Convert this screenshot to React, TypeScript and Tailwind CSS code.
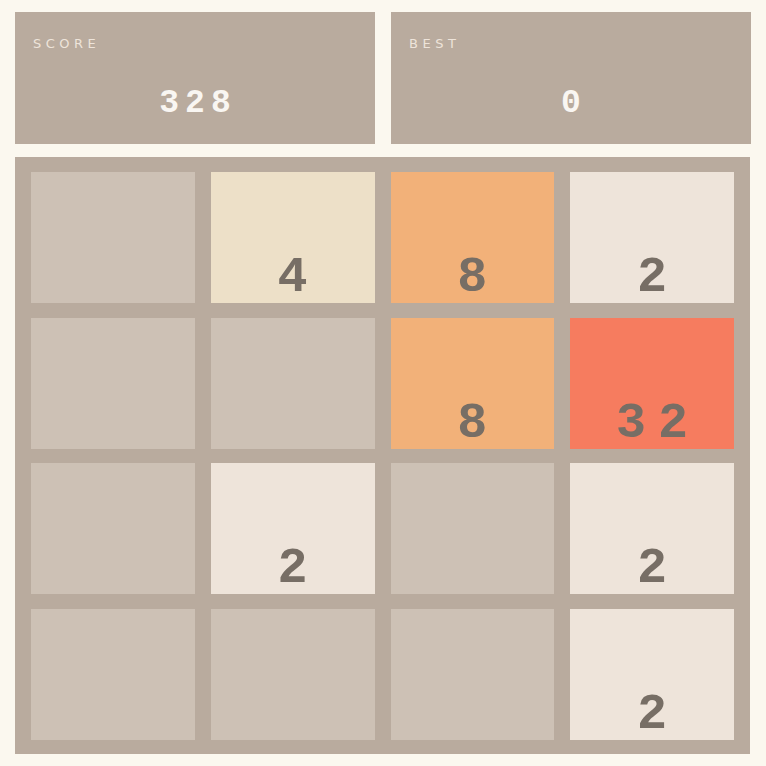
import React from 'react';

const board: number[][] = [
  [0, 4, 8, 2],
  [0, 0, 8, 32],
  [0, 2, 0, 2],
  [0, 0, 0, 2],
];

const tileColor: Record<number, string> = {
  0: 'bg-[#cdc1b5]',
  2: 'bg-[#eee4da]',
  4: 'bg-[#ede0c8]',
  8: 'bg-[#f2b179]',
  16: 'bg-[#f59563]',
  32: 'bg-[#f67c5f]',
};

const mono = { fontFamily: '"Liberation Mono", "DejaVu Sans Mono", monospace' };

const ScoreBox: React.FC<{ label: string; value: number }> = ({ label, value }) => (
  <div className="h-[132px] flex-1 bg-[#b9ab9e] px-[18px] pt-6" style={mono}>
    <div
      className="text-[13px] leading-4 tracking-[4.5px] text-[#eee4da]"
      style={{ fontFamily: '"DejaVu Sans", "Liberation Sans", sans-serif' }}
    >
      {label}
    </div>
    <div className="mt-9 pl-[6px] text-center text-[33px] font-bold leading-8 tracking-[6px] text-[#f9f6f2]">
      {value}
    </div>
  </div>
);

const Tile: React.FC<{ value: number }> = ({ value }) => (
  <div className={`flex h-[131px] items-end justify-center ${tileColor[value] ?? 'bg-[#edcf72]'}`}>
    {value > 0 && (
      <span
        className="pl-[12px] text-[50px] font-bold leading-none tracking-[12px] text-[#776e65]"
        style={mono}
      >
        {value}
      </span>
    )}
  </div>
);

export default function App() {
  return (
    <div className="min-h-[766px] w-[766px] bg-[#fbf8ef] pl-[15px] pt-3">
      <div className="flex w-[736px] gap-4">
        <ScoreBox label="SCORE" value={328} />
        <ScoreBox label="BEST" value={0} />
      </div>

      {/* board */}
      <div className="mt-[13px] grid w-[735px] grid-cols-4 gap-x-4 gap-y-[14.5px] bg-[#b9ab9e] px-4 pb-[14px] pt-[15px]">
        {board.flat().map((v, i) => (
          <Tile key={i} value={v} />
        ))}
      </div>
    </div>
  );
}
